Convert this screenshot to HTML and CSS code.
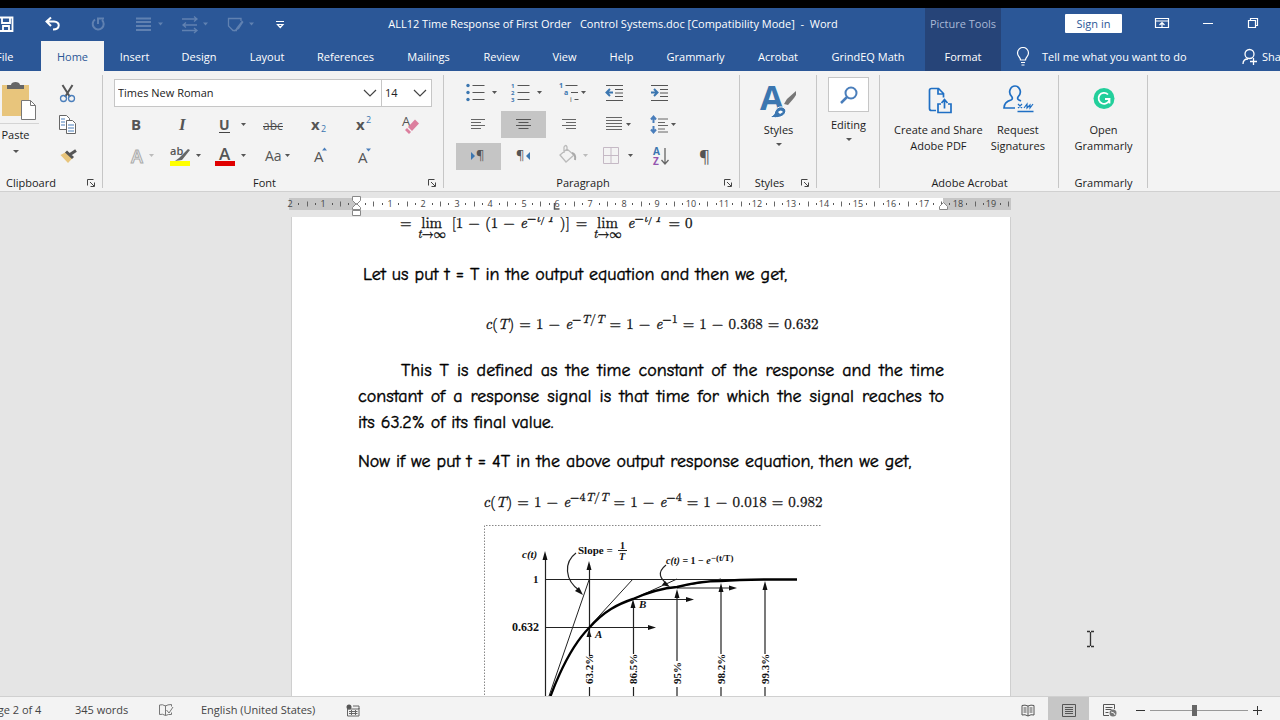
FILE: index.html
```html
<!DOCTYPE html>
<html lang="en">
<head>
<meta charset="utf-8">
<title>ALL12 Time Response of First Order Control Systems.doc - Word</title>
<link rel="stylesheet" href="styles.css">
</head>
<body>
<header class="titlebar">
  <nav class="quick" aria-label="Quick access">
    <button aria-label="Save"><svg viewBox="-16 8 46 33"><path d="M0 17.500H12.500V31H0M2 18V23H10V18M3 31V26H9V31" fill="none" stroke="#fff" stroke-width="1.800"/></svg></button>
    <button aria-label="Undo"><svg viewBox="30 8 46 33"><path d="M51 17.500L46.500 21.500L51 26M47 21.500H54C60.500 21.500 60.500 29.500 53 29.500" fill="none" stroke="#fff" stroke-width="2"/></svg></button>
    <button aria-label="Redo"><svg viewBox="76 8 46 33" class="faded"><path d="M95 19.500A5.500 5.500 0 1 0 102 20M98 24V18.500H104" fill="none" stroke="#fff" stroke-width="2"/></svg></button>
    <button aria-label="Line weight"><svg viewBox="122 8 46 33" class="faded"><path d="M136 18.500h15M136 22h15M136 26h15M136 30h15" stroke="#fff" stroke-width="2"/><path d="M158 22.500h5l-2.500 3z" fill="#fff"/></svg></button>
    <button aria-label="Arrows"><svg viewBox="168 8 46 33" class="faded"><path d="M182 19h14M183 25h14M182 30.500h14M194 16.500l3 2.500l-3 2.500M186 22.500l-3 2.500l3 2.500M194 28l3 2.500l-3 2.500" fill="none" stroke="#fff" stroke-width="1.300"/><path d="M203 22.500h5l-2.500 3z" fill="#fff"/></svg></button>
    <button aria-label="Shape outline"><svg viewBox="214 8 46 33" class="faded"><path d="M237 30.500H233L228.500 26V18.500H241V21" fill="none" stroke="#fff" stroke-width="1.300"/><path d="M242 20.500L237 27L234 31.500L239 29L243.500 22z" fill="#fff"/><path d="M249 22.500h5l-2.500 3z" fill="#fff"/></svg></button>
    <button aria-label="Customize toolbar"><svg viewBox="260 8 46 33"><path d="M276 21.500h8M277.500 24.500h5.500l-2.750 3z" fill="none" stroke="#fff" stroke-width="1.200"/></svg></button>
  </nav>
  <h1 class="doc-title">ALL12 Time Response of First Order&nbsp;&nbsp; Control Systems.doc [Compatibility Mode]&nbsp; -&nbsp; Word</h1>
  <div class="context-title">Picture Tools</div>
  <div class="window-tools">
    <button class="sign-in">Sign in</button>
    <button aria-label="Ribbon display options"><svg viewBox="1139 8 46 33"><path d="M1155.500 18.500h13v9h-13zM1155.500 21h13M1162 27v-4M1159.500 25l2.500-2.500l2.500 2.500" fill="none" stroke="#fff" stroke-width="1.200"/></svg></button>
    <button aria-label="Minimize"><svg viewBox="1185 8 46 33"><path d="M1203 23.500h10" stroke="#fff"/></svg></button>
    <button aria-label="Restore"><svg viewBox="1231 8 46 33"><path d="M1248.500 20.500h7v7h-7zM1250.500 20v-1.500h7v7h-1.500" fill="none" stroke="#fff" stroke-width="1.200"/></svg></button>
  </div>
</header>
<nav class="tabs" aria-label="Ribbon tabs">
  <button class="file">File</button><button class="active">Home</button><button>Insert</button><button>Design</button><button>Layout</button><button>References</button><button>Mailings</button><button>Review</button><button>View</button><button>Help</button><button>Grammarly</button><button>Acrobat</button><button>GrindEQ Math</button><span></span><button class="context">Format</button>
  <button class="tell"><svg viewBox="0 0 14 20" width="14" height="20"><path d="M4.500 13C4.500 10 1.500 9.500 1.500 6A5.500 5.500 0 0 1 12.500 6C12.500 9.500 9.500 10 9.500 13zM5 15.500h4M5.500 18h3" fill="none" stroke="#fff" stroke-width="1.200"/></svg>Tell me what you want to do</button>
  <button class="share"><svg viewBox="0 0 16 18" width="16" height="18"><circle cx="7.500" cy="6" r="4.500" fill="none" stroke="#fff" stroke-width="1.300"/><path d="M1 16C1 12 4 11 6 11M8 13.500h7M11.500 10v7" fill="none" stroke="#fff" stroke-width="1.300"/></svg>Share</button>
</nav>

<main class="ribbon">
  <section class="group clipboard">
    <div class="body">
      <button class="paste"><svg viewBox="-8 79 47 46"><path d="M2 85h27v31H2z" fill="#e8c57c"/><path d="M7 85h4c0-4 9-4 9 0h4v4H7z" fill="#666"/><path d="M21.500 100.500h9l5 5v14h-14z" fill="#fff" stroke="#777"/><path d="M30.500 100.500v5h5" fill="none" stroke="#777"/><path d="M-8 123.500h47" stroke="#d4d4d4"/></svg><span>Paste</span><i class="caret"></i></button>
      <div class="stack">
        <button class="tool" aria-label="Cut"><svg viewBox="45 79 45 27"><path d="M62.500 85L70 97M72.500 85L65 97" stroke="#555" stroke-width="2"/><circle cx="63.500" cy="98.500" r="3" fill="none" stroke="#4a7ebb" stroke-width="1.300"/><circle cx="71.500" cy="98.500" r="3" fill="none" stroke="#4a7ebb" stroke-width="1.300"/></svg></button>
        <button class="tool" aria-label="Copy"><svg viewBox="45 111 45 27"><g fill="#fff" stroke="#666"><path d="M59.500 115.500h7l3 3v11h-10z"/><path d="M66.500 120.500h6l3 3v10h-9z"/></g><path d="M61 119h4M61 122h4M61 125h4M68 125h6M68 128h6M68 131h6" stroke="#4a7ebb"/></svg></button>
        <button class="tool" aria-label="Format painter"><svg viewBox="45 143 45 27"><path d="M60.500 155l6.500-3.500 6 6-5 5.500z" fill="#e8c57c"/><path d="M66 151.500l7 6.500M70 154.500l6-4" stroke="#555" stroke-width="3"/></svg></button>
      </div>
    </div>
    <footer><span>Clipboard</span><button class="launch" aria-label="Clipboard options"><svg viewBox="0 0 10 10"><path d="M1.500 7.500v-6h6M4 4l4 4M8.500 4.500v4h-4" fill="none" stroke="#444"/></svg></button></footer>
  </section>

  <section class="group font">
    <div class="body rows">
      <div class="combos">
        <label class="combo name"><select aria-label="Font"><option>Times New Roman</option></select><svg viewBox="0 0 14 8"><path d="M1 1l6 6 6-6" fill="none" stroke="#444" stroke-width="1.200"/></svg></label>
        <label class="combo size"><select aria-label="Font size"><option>14</option></select><svg viewBox="0 0 14 8"><path d="M1 1l6 6 6-6" fill="none" stroke="#444" stroke-width="1.200"/></svg></label>
      </div>
      <div class="row">
        <button class="tool" aria-label="Bold"><svg viewBox="114 111 45 27"><text x="131" y="130" font-size="15" font-weight="700">B</text></svg></button>
        <button class="tool" aria-label="Italic"><svg viewBox="159 111 45 27"><text x="179" y="130" font-size="17" font-weight="700" class="serif" font-style="italic">I</text></svg></button>
        <button class="tool" aria-label="Underline"><svg viewBox="204 111 45 27"><text x="219" y="130" font-size="14" font-weight="700">U</text><path d="M219 132.500h11" stroke="#444"/><path d="M241 123h5l-2.500 3z" fill="#555"/></svg></button>
        <button class="tool" aria-label="Strikethrough"><svg viewBox="249 111 45 27"><text x="263" y="130" font-size="12">abc</text><path d="M263 126.500h20" stroke="#444"/></svg></button>
        <button class="tool" aria-label="Subscript"><svg viewBox="294 111 45 27"><text x="311" y="130" font-size="15" font-weight="700">x</text><text x="321" y="132" font-size="9" class="blue">2</text></svg></button>
        <button class="tool" aria-label="Superscript"><svg viewBox="339 111 45 27"><text x="356" y="130" font-size="15" font-weight="700">x</text><text x="366" y="123" font-size="9" class="blue">2</text></svg></button>
        <button class="tool" aria-label="Clear formatting"><svg viewBox="384 111 45 27"><text x="402" y="126" font-size="13">A</text><path d="M408 127l7-7.500 4 4-7 7.500zM407 128l4 4-2 2-4-4z" fill="#dc7f9e"/></svg></button>
      </div>
      <div class="row">
        <button class="tool" aria-label="Text effects"><svg viewBox="114 143 45 27"><text x="131" y="163" font-size="18" font-weight="600" class="outline">A</text><path d="M149 154h5l-2.500 3z" fill="#bbb"/></svg></button>
        <button class="tool" aria-label="Highlight"><svg viewBox="159 143 45 27"><path d="M170 161h20v5h-20z" fill="#ff0"/><text x="170" y="155" font-size="11" font-weight="600">ab</text><path d="M188 149l-9 9-4 3 7-1 8-10z" fill="#666"/><path d="M196 154h5l-2.500 3z" fill="#555"/></svg></button>
        <button class="tool" aria-label="Font colour"><svg viewBox="204 143 45 27"><text x="219" y="160" font-size="17" font-weight="600">A</text><path d="M215 161h20v5h-20z" fill="#e00000"/><path d="M241 154h5l-2.500 3z" fill="#555"/></svg></button>
        <button class="tool" aria-label="Change case"><svg viewBox="249 143 45 27"><text x="265" y="161" font-size="14">Aa</text><path d="M285 154h5l-2.500 3z" fill="#555"/></svg></button>
        <button class="tool" aria-label="Grow font"><svg viewBox="294 143 45 27"><text x="314" y="162" font-size="15">A</text><path d="M322 150.500h5l-2.500-3z" fill="#4a7ebb"/></svg></button>
        <button class="tool" aria-label="Shrink font"><svg viewBox="339 143 45 27"><text x="358" y="163" font-size="15">A</text><path d="M366 148.500h5l-2.500 3z" fill="#4a7ebb"/></svg></button>
      </div>
    </div>
    <footer><span>Font</span><button class="launch" aria-label="Font options"><svg viewBox="0 0 10 10"><path d="M1.500 7.500v-6h6M4 4l4 4M8.500 4.500v4h-4" fill="none" stroke="#444"/></svg></button></footer>
  </section>

  <section class="group paragraph">
    <div class="body rows">
      <div class="row">
        <button class="tool" aria-label="Bullets"><svg viewBox="456 79 45 27"><path d="M472.500 85.500h12M472.500 92.500h12M472.500 99.500h12" stroke="#555"/><g fill="#3b76b0"><circle cx="468" cy="85.500" r="1.700"/><circle cx="468" cy="92.500" r="1.700"/><circle cx="468" cy="99.500" r="1.700"/></g><path d="M492 91h5l-2.500 3z" fill="#555"/></svg></button>
        <button class="tool" aria-label="Numbering"><svg viewBox="501 79 45 27"><path d="M517.500 85.500h12M517.500 92.500h12M517.500 99.500h12" stroke="#555"/><g class="blue" font-size="6" font-weight="700"><text x="511" y="88">1</text><text x="511" y="95">2</text><text x="511" y="102">3</text></g><path d="M537 91h5l-2.500 3z" fill="#555"/></svg></button>
        <button class="tool" aria-label="Multilevel list"><svg viewBox="546 79 45 27"><path d="M565.500 85.500h12M571 92.500h7M574.500 99.500h4" stroke="#555"/><g class="blue" font-size="7" font-weight="700"><text x="559" y="88">1</text><text x="564" y="95">a</text></g><text x="570" y="102" font-size="7">i</text><path d="M581 91h5l-2.500 3z" fill="#555"/></svg></button>
        <button class="tool" aria-label="Decrease indent"><svg viewBox="591 79 45 27"><path d="M606 85.500h17M615 89.500h8M615 93h8M615 96.500h8M606 100.500h17" stroke="#555"/><path d="M606 92.500h7M610 89l-3.500 3.500 3.500 3.500" fill="none" stroke="#3b76b0" stroke-width="2"/></svg></button>
        <button class="tool" aria-label="Increase indent"><svg viewBox="636 79 45 27"><path d="M651 85.500h17M660 89.500h8M660 93h8M660 96.500h8M651 100.500h17" stroke="#555"/><path d="M651 92.500h7M654 89l3.500 3.500-3.500 3.500" fill="none" stroke="#3b76b0" stroke-width="2"/></svg></button>
      </div>
      <div class="row">
        <button class="tool" aria-label="Align left"><svg viewBox="456 111 45 27"><path d="M471 119.500h14M471 122.500h10M471 125.500h14M471 128.500h10" stroke="#666"/></svg></button>
        <button class="tool on" aria-label="Center"><svg viewBox="501 111 45 27"><path d="M516 119.500h15M518.500 122.500h10M516 125.500h15M518.500 128.500h10" stroke="#555"/></svg></button>
        <button class="tool" aria-label="Align right"><svg viewBox="546 111 45 27"><path d="M562 119.500h14M566 122.500h10M562 125.500h14M566 128.500h10" stroke="#666"/></svg></button>
        <button class="tool" aria-label="Justify"><svg viewBox="591 111 45 27"><path d="M606 117.500h16M606 120.500h16M606 123.500h16M606 126.500h16M606 129.500h16" stroke="#666"/><path d="M626 123h5l-2.500 3z" fill="#555"/></svg></button>
        <button class="tool" aria-label="Line spacing"><svg viewBox="636 111 45 27"><path d="M658 119h10M658 122.500h7M658 125.500h10M658 129h7M658 132h10" stroke="#666"/><path d="M653.500 117v6M653.500 126v6M651 119.500l2.500-3 2.500 3M651 129.500l2.500 3 2.500-3" fill="none" stroke="#4a7ebb" stroke-width="2"/><path d="M671 123h5l-2.500 3z" fill="#555"/></svg></button>
      </div>
      <div class="row">
        <button class="tool on" aria-label="Left to right"><svg viewBox="456 143 45 27"><text x="476" y="160" font-size="13">¶</text><path d="M471 152v8l4-4z" fill="#3b76b0"/></svg></button>
        <button class="tool" aria-label="Right to left"><svg viewBox="501 143 45 27"><text x="516" y="160" font-size="13">¶</text><path d="M530 152v8l-4-4z" fill="#3b76b0"/></svg></button>
        <button class="tool" aria-label="Shading"><svg viewBox="546 143 45 27"><path d="M560 155l7-6 7 6-8 7zM564 153v-6q2-3 3 0v4" fill="none" stroke="#bbb" stroke-width="1.300"/><path d="M572 153q4 1 3 7" fill="none" stroke="#aaa" stroke-width="2"/><path d="M583 154h5l-2.500 3z" fill="#bbb"/></svg></button>
        <button class="tool" aria-label="Borders"><svg viewBox="591 143 45 27"><path d="M603.500 147.500h15v16h-15zM611 148v15M604 155.500h14" fill="none" stroke="#c5b9c5"/><path d="M628 154h5l-2.500 3z" fill="#555"/></svg></button>
        <button class="tool" aria-label="Sort"><svg viewBox="636 143 45 27"><text x="653" y="155" font-size="10" font-weight="700" class="blue">A</text><text x="653" y="165" font-size="10" font-weight="700" class="violet">Z</text><path d="M665 148v15M661.500 160l3.500 4 3.500-4" fill="none" stroke="#666" stroke-width="1.300"/></svg></button>
        <button class="tool" aria-label="Show marks"><svg viewBox="681 143 45 27"><text x="699" y="162" font-size="17">¶</text></svg></button>
      </div>
    </div>
    <footer><span>Paragraph</span><button class="launch" aria-label="Paragraph options"><svg viewBox="0 0 10 10"><path d="M1.500 7.500v-6h6M4 4l4 4M8.500 4.500v4h-4" fill="none" stroke="#444"/></svg></button></footer>
  </section>

  <section class="group styles">
    <div class="body wide"><button class="big"><svg viewBox="759 79 40 40" width="40" height="40"><text x="760" y="110" font-size="34" font-weight="700" class="blue">A</text><path d="M796 91l-9 8-3 5 4 1 6-7 2-3z" fill="#777"/><path d="M770 117q5-2 5-6c3-6 10-5 11 0c-1 6-9 8-16 6z" fill="#3b76b0" stroke="#fff"/><path d="M778 112q3-3 5 0l-3 2z" fill="#fff"/></svg><span>Styles</span><i class="caret"></i></button></div>
    <footer><span>Styles</span><button class="launch" aria-label="Styles options"><svg viewBox="0 0 10 10"><path d="M1.500 7.500v-6h6M4 4l4 4M8.500 4.500v4h-4" fill="none" stroke="#444"/></svg></button></footer>
  </section>

  <section class="group editing">
    <div class="body wide"><button class="big"><svg class="boxed" viewBox="827 77 41 35" width="41" height="35"><circle cx="850" cy="93" r="5.500" fill="none" stroke="#4a7ebb" stroke-width="2"/><path d="M846 97l-6 6" stroke="#4a7ebb" stroke-width="2.500"/></svg><span>Editing</span><i class="caret"></i></button></div>
  </section>

  <section class="group acrobat">
    <div class="body wide">
      <button class="big"><svg viewBox="918 80 40 40" width="40" height="40"><path d="M936 111.500h-4.500q-2 0-2-2V91.500q0-2 2-2h7l5 5v4M938 90v5h6M941 105h-3v8.500h13V105h-3M944.500 109.500V101M941.500 104l3-3.500 3 3.500" fill="none" stroke="#1f6fc4" stroke-width="1.700"/></svg><span>Create and Share<br>Adobe PDF</span></button>
      <button class="big"><svg viewBox="996 80 40 40" width="40" height="40"><path d="M1013 109h-11q0-6 7-8 2-1 1-3c-5-5-1-11 3-11s8 6 3 11q-1 2 1 3l2 1M1015.500 112.500h16" fill="none" stroke="#1f6fc4" stroke-width="1.700"/><path d="M1016 105l4 4m0-4l-4 4M1022 109l3-4v4l3-3v3l3-4" fill="none" stroke="#1f6fc4" stroke-width="1.200"/></svg><span>Request<br>Signatures</span></button>
    </div>
    <footer><span>Adobe Acrobat</span></footer>
  </section>

  <section class="group grammarly">
    <div class="body wide"><button class="big"><svg viewBox="1083 80 40 40" width="40" height="40"><circle cx="1103" cy="99.500" r="10.500" fill="#22cf9b"/><path d="M1107 95.500A5.500 5.500 0 1 0 1108.500 100H1104M1108.500 100v4.500" fill="none" stroke="#fff" stroke-width="1.800"/></svg><span>Open<br>Grammarly</span></button></div>
    <footer><span>Grammarly</span></footer>
  </section>
</main>

<section class="workspace">
  <svg class="ruler" viewBox="291 193 720 24" role="img" aria-label="Ruler">
    <path d="M289 198h67v12h-67zM943 198h68v12h-68z" fill="#c6c6c6"/><path d="M356 198h587v12H356z" fill="#fff"/>
    <g class="marks"></g>
    <path d="M352.500 196.500h8v4l-4 4-4-4zM352.500 209.500v-2l4-4 4 4v2zM352.500 210.500h8v5h-8zM939.500 209.500v-3l4-4 4 4v3z" fill="#fff" stroke="#888"/><path d="M554.500 203v6h5" fill="none" stroke="#555" stroke-width="1.500"/>
  </svg>
  <article class="page">
    <p class="eq limit"><span>=</span><span class="lim"><span>lim</span><small><i>t</i>→∞</small></span><span>[1 − (1 − <i>e</i><sup>−<i>t</i>/<i>T</i></sup> )]</span><span>=</span><span class="lim"><span>lim</span><small><i>t</i>→∞</small></span><span><i>e</i><sup>−<i>t</i>/<i>T</i></sup></span><span>= 0</span></p>
    <p class="text first">Let us put t = T in the output equation and then we get,</p>
    <p class="eq one"><i>c</i>(<i>T</i>) = 1 − <i>e</i><sup>−<i>T</i>/<i>T</i></sup> = 1 − <i>e</i><sup>−1</sup> = 1 − 0.368 = 0.632</p>
    <p class="text justified">This T is defined as the time constant of the response and the time constant of a response signal is that time for which the signal reaches to its&nbsp;63.2% of its final value.</p>
    <p class="text now">Now if we put t = 4T in the above output response equation, then we get,</p>
    <p class="eq two"><i>c</i>(<i>T</i>) = 1 − <i>e</i><sup>−4<i>T</i>/<i>T</i></sup> = 1 − <i>e</i><sup>−4</sup> = 1 − 0.018 = 0.982</p>
    <svg class="chart" viewBox="484 525 337 200" width="337" height="200" role="img" aria-label="First order step response">
      <path d="M484.500 725V525.500H821" fill="none" stroke="#888" stroke-dasharray="1.500 1.500"/>
      <g fill="none" stroke="#222" stroke-width="1.200">
        <path d="M545.500 725V556M545 579.500H797M545 627.500H650M589.500 642V565M589.500 656V634M589.500 687v38M633.500 654V604M633.500 687v38M677 661V594M677 687v38M721 654V590M721 687v38M765 654V588M765 687v38M633 599.500h56M677 588h56"/>
        <path d="M549 696L589 580M589 627L633 579M633 599L677 579M677 587L721 579" stroke-width="1"/>
        <path d="M576 553C564 562 564 580 580 591M666 565C656 573 661 579 667 584"/>
      </g>
      <path d="M541 725C549 697 566 651 589 628C604 611 618 604 633 599C651 591 664 588 677 587C696 582 711 581 721 581C746 579 765 579.500 797 579.500" fill="none" stroke="#000" stroke-width="2.400"/>
      <path d="M545 551l-2.500 9h5zM589 561l-2.500 9h5zM656 627.500l-8-2.500v5zM694 599.500l-8-2.500v5zM737 588l-8-2.500v5zM589 629l-2.500 8h5zM633 599l-2.500 9h5zM677 589l-2.500 9h5zM721 583l-2.500 9h5zM765 581l-2.500 9h5zM583 595l-8-4 4-4zM670 587l-8-2 3-4z" fill="#111"/>
      <g class="chart-text" font-size="11">
        <text x="522" y="558" font-style="italic">c(t)</text><text x="533" y="583">1</text><text x="512" y="631" font-size="12">0.632</text>
        <text x="578" y="554">Slope =</text><text x="620" y="549" font-size="10">1</text><path d="M618 550.500h9" stroke="#222"/><text x="619" y="560" font-size="10" font-style="italic">T</text>
        <text x="666" y="564" font-size="10"><tspan font-style="italic">c(t)</tspan> = 1 − <tspan font-style="italic">e</tspan><tspan dy="-3" font-size="9">−(t/T)</tspan></text>
        <text x="595" y="638" font-style="italic">A</text><text x="639" y="608" font-style="italic">B</text>
        <g class="vertical" font-size="11"><text transform="translate(593 684) rotate(-90)">63.2%</text><text transform="translate(637 684) rotate(-90)">86.5%</text><text transform="translate(681 684) rotate(-90)">95%</text><text transform="translate(725 684) rotate(-90)">98.2%</text><text transform="translate(769 684) rotate(-90)">99.3%</text></g>
      </g>
    </svg>
  </article>
  <svg class="cursor" viewBox="0 0 9 18" width="9" height="18"><path d="M1 1.500h3M5 1.500h3M4.500 2v14M1 16.500h3M5 16.500h3" stroke="#333" stroke-width="1.300"/></svg>
</section>

<footer class="status">
  <span class="page-count">Page 2 of 4</span><span class="words">345 words</span>
  <button class="proof" aria-label="Proofing"><svg viewBox="0 0 16 14" width="16" height="14"><path d="M7.500 2.500v10M7.500 3q-3-2-6-1v9.500q3-1 6 1M7.500 3q2-1.500 6-1.500v2M7.500 12.500q3-1.500 6-1v-2M8.500 7l2.500 3 4-6" fill="none" stroke="#777"/></svg></button>
  <span class="language">English (United States)</span>
  <button class="macro" aria-label="Macros"><svg viewBox="0 0 14 13" width="14" height="13"><circle cx="3" cy="3" r="2.500" fill="#555"/><path d="M7 2h6v3H1.500v7h11.500V4M3 7.500h8.500M3 9.500h8.500M5.500 6v5M9.500 6v5" fill="none" stroke="#666"/></svg></button>
  <div class="views">
    <button aria-label="Read mode"><svg viewBox="0 0 14 13" width="14" height="13"><path d="M7 2v10M7 2Q4 .5 1 1.500V11q3-1 6 1q3-2 6-1V1.500Q10 .5 7 2M2.500 4h3M2.500 6h3M2.500 8h3M8.500 4h3M8.500 6h3M8.500 8h3" fill="none" stroke="#555"/></svg></button>
    <button class="on" aria-label="Print layout"><svg viewBox="0 0 14 13" width="14" height="13"><path d="M.5.5h13v12H.5zM3 3.500h8M3 5.500h8M3 7.500h8M3 9.500h8" fill="none" stroke="#555"/></svg></button>
    <button aria-label="Web layout"><svg viewBox="0 0 14 13" width="14" height="13"><path d="M6 11.500H.5V.5h11V5M2.500 3.500h7M2.500 5.500h6M2.500 8.500h3" fill="none" stroke="#555"/><circle cx="10" cy="9" r="3.500" fill="#777"/><path d="M8 8l3 1 1 2" stroke="#eee" fill="none"/></svg></button>
  </div>
  <button class="zoom-step" aria-label="Zoom out"><svg viewBox="0 0 9 9" width="9" height="9"><path d="M0 4.500h9" stroke="#333"/></svg></button>
  <input class="zoom" type="range" min="0" max="100" value="45" aria-label="Zoom">
  <button class="zoom-step" aria-label="Zoom in"><svg viewBox="0 0 9 9" width="9" height="9"><path d="M0 4.500h9M4.500 0v9" stroke="#333"/></svg></button>
</footer>
<script src="ruler.js"></script>
</body>
</html>
```
FILE: ruler.js
```js
const marks = document.querySelector('.ruler .marks');
const origin = 356.6;
const unit = 33.4;

function add(name, attributes, text) {
  const node = document.createElementNS('http://www.w3.org/2000/svg', name);
  Object.entries(attributes).forEach(([key, value]) => node.setAttribute(key, value));
  if (text) node.textContent = text;
  marks.append(node);
}

for (let q = -8; q <= 78; q += 1) {
  const x = Math.round(origin + q * unit / 4);
  if (q === 0) continue;
  if (q % 4 === 0) {
    add('text', { x, y: 207, 'text-anchor': 'middle' }, String(Math.abs(q / 4)));
  } else if (q % 2 === 0) {
    add('path', { d: `M${x}.500 201.500v5`, stroke: '#666' });
  } else {
    add('path', { d: `M${x} 204h1`, stroke: '#555', 'stroke-width': 2 });
  }
}
```
FILE: styles.css
```css
* { box-sizing: border-box; }
body { margin: 0; height: 100vh; overflow: hidden; display: flex; flex-direction: column; border-top: 8px solid #000; background: #e5e5e5; color: #1c1c1c; font: 11px/16px "Segoe UI", "Open Sans", "Noto Sans", sans-serif; }
button { margin: 0; padding: 0; border: 0; background: none; color: inherit; font: inherit; white-space: nowrap; }
svg { display: block; flex: none; }
svg text { fill: #555; font-family: "Open Sans", sans-serif; }
svg .serif { font-family: "Liberation Serif", serif; }
svg .blue, svg .blue text { fill: #3b76b0; }
svg .violet { fill: #9455b0; }
svg .outline { fill: #f7f7f7; stroke: #aaa; }
p, h1 { margin: 0; font-weight: 400; }

.titlebar, .tabs { flex: none; background: #2b5797; color: #fff; }
.titlebar { height: 33px; display: grid; grid-template-columns: 301px minmax(0, 624px) 76px 1fr; font-weight: 500; }
.quick { display: flex; margin-left: -16px; }
.quick svg, .window-tools button:not(.sign-in) svg { width: 46px; height: 33px; }
.faded { opacity: .25; }
.doc-title { font-size: 11px; font-weight: 500; line-height: 31px; text-align: center; white-space: nowrap; }
.context-title { background: #264478; color: #a9b9d6; line-height: 31px; text-align: center; }
.window-tools { display: flex; padding-left: 64px; overflow: hidden; }
.sign-in { width: 57px; height: 19px; margin: 6px 17px 0 0; flex: none; background: #fff; color: #2b5797; border-radius: 1px; }
.tabs { height: 30px; display: grid; grid-template-columns: 41px 63px 61px 68px 68px 89px 77px 69px 57px 57px 91px 74px 106px 4px 76px 241px 1fr; overflow: hidden; font-weight: 500; }
.tabs button { padding-top: 2px; }
.tabs .file { text-align: left; margin-left: -4px; }
.tabs .active { background: #f3f3f3; color: #2b5797; }
.tabs .context { background: #264478; }
.tabs .tell { display: flex; align-items: center; gap: 12px; padding-left: 15px; }
.tabs .share { display: flex; align-items: center; gap: 4px; }

.ribbon { flex: none; display: flex; height: 121px; background: #f3f3f3; border-bottom: 1px solid #d0d0d0; overflow: hidden; }
.group { flex: none; display: flex; flex-direction: column; position: relative; padding-top: 8px; }
.group::after { content: ""; position: absolute; right: 0; top: 4px; bottom: 3px; border-right: 1px solid #c6c6c6; }
.body { flex: 1; display: flex; }
.group footer { display: flex; height: 16px; line-height: 16px; text-align: center; }
.group footer span { flex: 1; }
.launch { width: 18px; }
.launch svg { width: 10px; height: 10px; margin-left: 1px; }
.clipboard { width: 126px; margin-left: -23px; }
.font { width: 341px; }
.paragraph { width: 296px; }
.styles { width: 77px; }
.editing { width: 63px; }
.acrobat { width: 179px; }
.grammarly { width: 89px; }
.grammarly .body, .styles .body, .editing .body { justify-content: center; }
.clipboard .body { justify-content: flex-end; padding-right: 13px; gap: 6px; }
.paste, .big { display: flex; flex-direction: column; align-items: center; }
.paste { width: 47px; }
.paste svg { width: 47px; height: 46px; }
.paste span { margin-top: 2px; }
.caret { border: 3px solid transparent; border-top-color: #555; border-bottom: 0; margin-top: 7px; }
.stack, .rows { display: flex; flex-direction: column; gap: 5px; }
.rows { padding-left: 11px; }
.paragraph .rows { padding-left: 12px; }
.row, .combos { display: flex; height: 27px; }
.tool, .tool svg { width: 45px; height: 27px; }
.tool.on { background: #c5c5c5; }
.combo { display: grid; grid-template-columns: 1fr 18px; align-items: center; height: 28px; border: 1px solid #c6c6c6; background: #fff; }
.combo.name { width: 268px; }
.combo.size { width: 50px; border-left: 0; }
.combo select { grid-area: 1 / 1 / 2 / 3; height: 26px; padding: 0 3px; border: 0; appearance: none; background: none; color: #222; font: inherit; }
.combo svg { grid-area: 1 / 2; width: 14px; height: 8px; pointer-events: none; }
.big span { margin-top: 3px; }
.styles .caret { margin-top: 5px; }
.editing .body { margin-top: -2px; }
.boxed { background: #fff; outline: 1px solid #c6c6c6; outline-offset: -1px; }
.editing .big span { margin-top: 5px; }
.editing .caret { margin-top: 5px; }
.acrobat .body { justify-content: center; gap: 8px; }

.workspace { flex: 1; min-height: 0; position: relative; display: flex; flex-direction: column; align-items: center; padding: 1px 0 0 22px; overflow: hidden; }
.ruler { width: 720px; height: 24px; overflow: visible; }
.ruler text { font-size: 9px; fill: #444; }
.page { flex: 1; min-height: 0; width: 720px; padding: 0 66px; background: #fff; border: solid #cfcfcf; border-width: 0 1px; overflow: hidden; color: #111; }
.text { font: 18px/26px "Comic Sans MS", "Comic Neue", Lato, sans-serif; color: #000; -webkit-text-stroke: 0.4px #000; }
.eq { font: 15px/26px "Latin Modern Roman", "Liberation Serif", serif; white-space: pre; -webkit-text-stroke: 0.3px #111; }
.eq sup { font-size: 12px; line-height: 0; vertical-align: 6px; }
.limit { display: flex; gap: 6px; height: 39px; margin: -8px 0 14px 42px; }
.lim { display: flex; flex-direction: column; align-items: center; padding-top: 6px; line-height: 14px; }
.lim small { font-size: 12px; line-height: 10px; margin-top: -1px; }
.first { margin: 0 0 22px 5px; }
.one { margin: 0 0 22px 127px; }
.justified { margin-bottom: 13px; text-align: justify; text-indent: 43px; }
.now { margin-bottom: 13px; white-space: nowrap; }
.two { margin: 0 0 11px 125px; }
.chart { margin-left: 126px; }
.chart-text text { font-family: "Liberation Serif", serif; font-weight: 700; fill: #111; }
.cursor { position: absolute; left: 1086px; bottom: 48px; }

.status { flex: none; display: flex; align-items: center; height: 24px; padding: 3px 18px 0 0; border-top: 1px solid #d0d0d0; background: #f3f3f3; line-height: 20px; color: #444; white-space: nowrap; }
.page-count { width: 90px; margin-left: -15px; }
.words { width: 83px; }
.proof { width: 43px; }
.language { width: 145px; }
.macro { width: 20px; }
.views { display: flex; align-self: stretch; margin: -3px 6px 0 auto; }
.views button { width: 41px; padding-top: 4px; display: grid; place-items: center; }
.views .on { background: #c6c6c6; }
.zoom-step { width: 9px; }
.zoom { appearance: none; width: 98px; height: 16px; margin: 0 5px; background: linear-gradient(#999, #999) center / 100% 1px no-repeat; }
.zoom::-webkit-slider-thumb { appearance: none; width: 5px; height: 11px; background: #666; }
```
